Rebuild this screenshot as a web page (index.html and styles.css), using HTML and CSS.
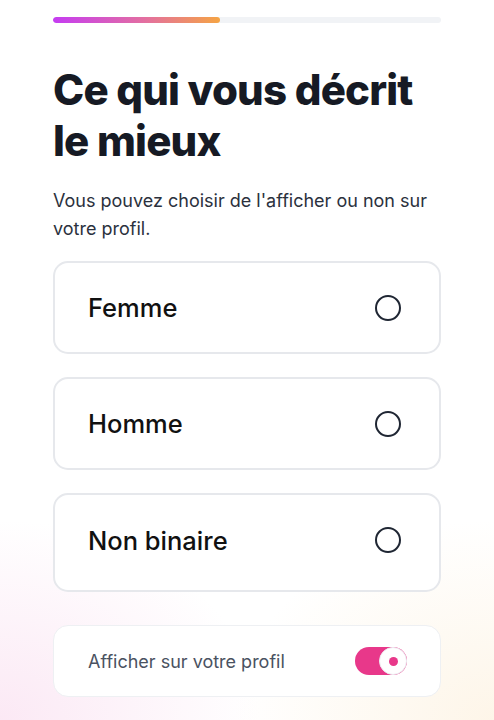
FILE: index.html
```html
<!DOCTYPE html>
<html lang="fr">
<head>
<meta charset="utf-8">
<link rel="stylesheet" href="styles.css">
</head>
<body>
<div class="page">
  <div class="progress"><div class="progress-fill" style="width: 43%"></div></div>
  <h1 class="title">Ce qui vous décrit le mieux</h1>
  <p class="subtitle">Vous pouvez choisir de l'afficher ou non sur votre profil.</p>
  <div class="options">
    <div class="option"><span class="option-label">Femme</span><span class="radio"></span></div>
    <div class="option"><span class="option-label">Homme</span><span class="radio"></span></div>
    <div class="option option-tall"><span class="option-label">Non binaire</span><span class="radio"></span></div>
  </div>
  <div class="toggle-card">
    <span class="toggle-label">Afficher sur votre profil</span>
    <span class="toggle"><span class="thumb"><span class="dot"></span></span></span>
  </div>
</div>
</body>
</html>
```

FILE: styles.css
```css
html, body {
  margin: 0;
  padding: 0;
}
body {
  width: 494px;
  height: 720px;
  overflow: hidden;
  font-family: Inter, "Noto Sans", sans-serif;
  color: #161a24;
  background:
    radial-gradient(ellipse 260px 200px at 0px 720px, rgba(248, 214, 236, 0.55), rgba(255,255,255,0) 100%),
    radial-gradient(ellipse 260px 200px at 494px 720px, rgba(252, 236, 210, 0.5), rgba(255,255,255,0) 100%),
    #ffffff;
}
.page {
  padding: 17px 53px 0 53px;
  display: flex;
  flex-direction: column;
}
.progress {
  height: 6px;
  border-radius: 3px;
  background: #f1f3f6;
  overflow: hidden;
}
.progress-fill {
  height: 100%;
  border-radius: 3px;
  background: linear-gradient(90deg, #c53cf2 0%, #e36fa0 55%, #f5a444 100%);
}
.title {
  margin: 41px 0 0 0;
  font-size: 42px;
  line-height: 51px;
  font-weight: 800;
  letter-spacing: -0.8px;
  color: #161a24;
  width: 380px;
}
.subtitle {
  margin: 21px 0 0 0;
  font-size: 18px;
  line-height: 28px;
  color: #2b313d;
}
.options {
  margin-top: 18px;
  display: flex;
  flex-direction: column;
  gap: 23px;
}
.option {
  height: 93px;
  box-sizing: border-box;
  border: 2px solid #e6e8ec;
  border-radius: 15px;
  background: #fff;
  display: flex;
  align-items: center;
  justify-content: space-between;
  padding: 0 38px 0 33px;
}
.option-tall {
  height: 99px;
  padding-bottom: 5px;
}
.option-label {
  font-size: 25.5px;
  font-weight: 500;
  color: #111111;
}
.radio {
  width: 26px;
  height: 26px;
  box-sizing: border-box;
  border: 2px solid #1f2633;
  border-radius: 50%;
}
.toggle-card {
  margin-top: 33px;
  height: 72px;
  box-sizing: border-box;
  border: 1px solid #eef0f3;
  border-radius: 15px;
  background: #fff;
  display: flex;
  align-items: center;
  justify-content: space-between;
  padding: 0 33px 0 34px;
}
.toggle-label {
  font-size: 18px;
  color: #4a5261;
}
.toggle {
  width: 52px;
  height: 28px;
  border-radius: 14px;
  background: #e8388a;
  display: flex;
  justify-content: flex-end;
  align-items: center;
}
.thumb {
  width: 28px;
  height: 28px;
  box-sizing: border-box;
  border-radius: 50%;
  background: #fff;
  border: 1px solid #eceef2;
  display: flex;
  align-items: center;
  justify-content: center;
}
.dot {
  width: 9px;
  height: 9px;
  border-radius: 50%;
  background: #e8388a;
}
```
